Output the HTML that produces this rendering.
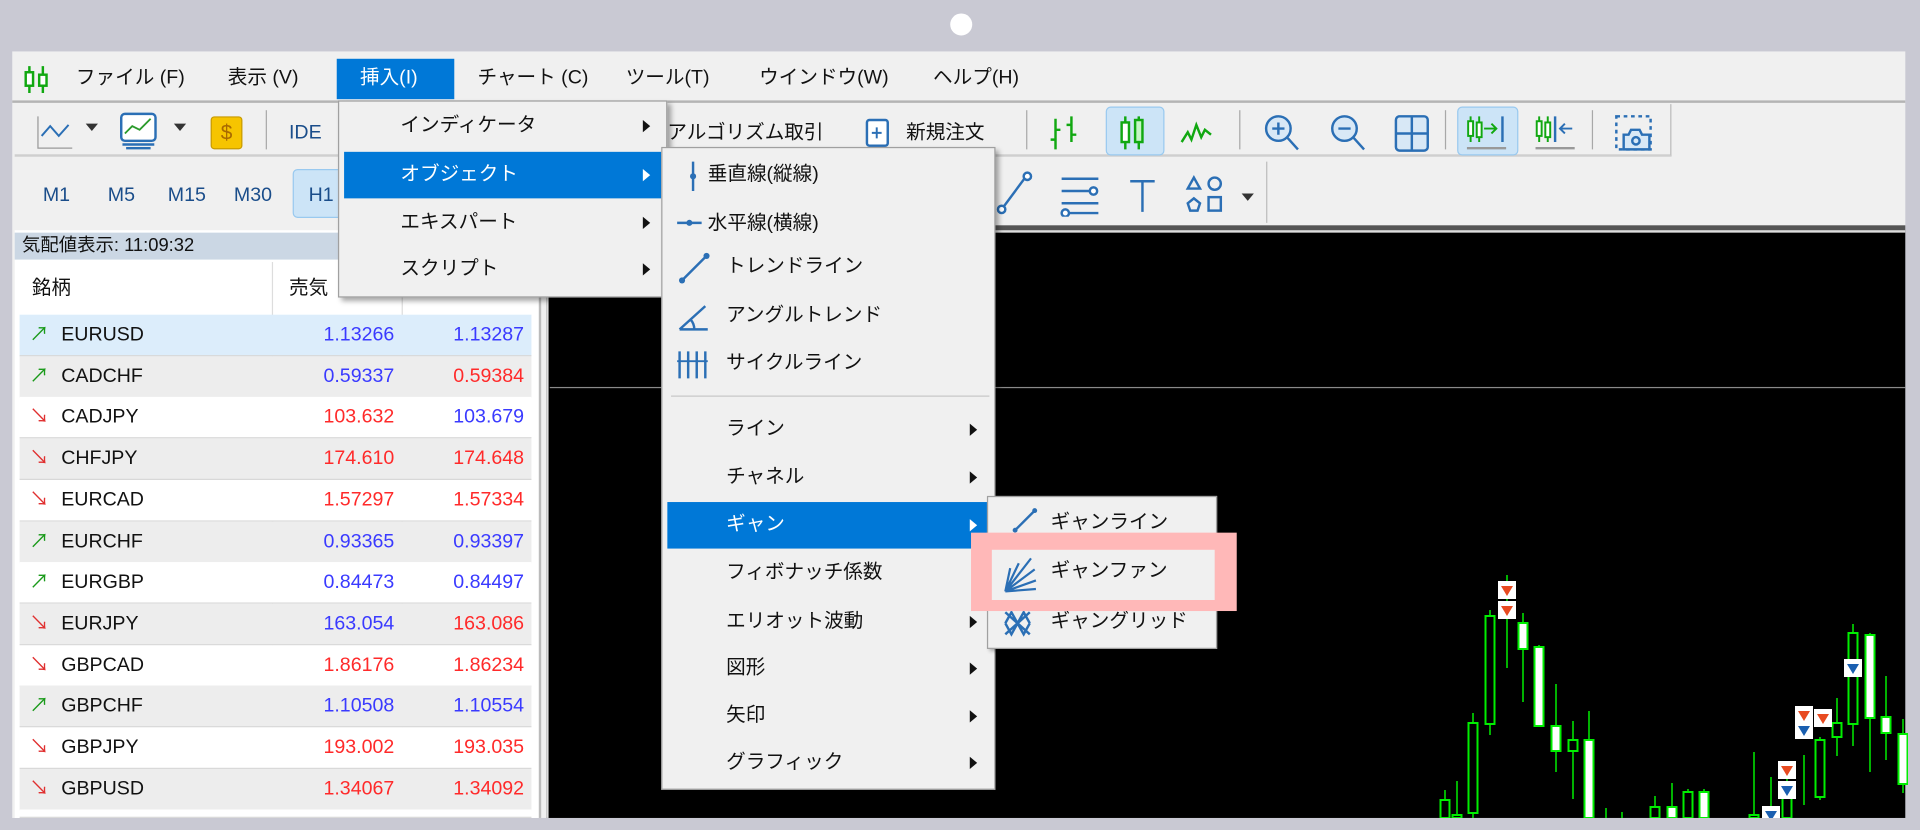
<!DOCTYPE html>
<html><head><meta charset="utf-8"><style>
*{margin:0;padding:0;box-sizing:border-box}
html,body{width:1920px;height:830px;overflow:hidden;background:#c9c9d3}
#w{position:absolute;left:0;top:0;width:1568px;height:678px;transform:scale(1.22449);transform-origin:0 0;font-family:"Liberation Sans","Noto Sans CJK JP",sans-serif;font-size:16px;color:#111}
.a{position:absolute}
.t{position:absolute;white-space:nowrap;line-height:20px}
.mi{position:absolute;white-space:nowrap;line-height:20px}
.arr{position:absolute;width:0;height:0;border-top:5px solid transparent;border-bottom:5px solid transparent;border-left:6px solid #111}
.hl{background:#0078d7;color:#fff}
.row{position:absolute;left:16px;width:418px;height:34px;border-bottom:1px solid #d8d8d8}
.row span{position:absolute;top:7px;line-height:20px}
.b{color:#3a3aff}.r{color:#ff2a2a}
.sep{position:absolute;width:1px;background:#a8a8a8}
</style></head><body>
<div id="w">
 <div class="a" style="left:776px;top:11px;width:18px;height:18px;border-radius:50%;background:#fff"></div>
 <div class="a" style="left:10px;top:42px;width:1546px;height:626px;background:#f0f0f0"></div>
 <svg class="a" style="left:18px;top:52px" width="24" height="26" viewBox="0 0 24 26"><g stroke="#11a811" stroke-width="2" fill="none"><line x1="6" y1="2" x2="6" y2="24"/><rect x="3" y="7" width="6" height="11" fill="#fff"/><line x1="17" y1="2" x2="17" y2="24"/><rect x="14" y="9" width="6" height="9" fill="#fff"/></g></svg>
 <div class="t" style="left:62px;top:54px">ファイル (F)</div>
 <div class="t" style="left:186px;top:54px">表示 (V)</div>
 <div class="a hl" style="left:275px;top:48px;width:96px;height:33px"></div>
 <div class="t" style="left:294px;top:54px;color:#fff">挿入(I)</div>
 <div class="t" style="left:390px;top:54px">チャート (C)</div>
 <div class="t" style="left:511px;top:54px">ツール(T)</div>
 <div class="t" style="left:620px;top:54px">ウインドウ(W)</div>
 <div class="t" style="left:762px;top:54px">ヘルプ(H)</div>
 <div class="a" style="left:10px;top:82px;width:1546px;height:2px;background:#b4b4b4"></div>
 <div class="a" style="left:12px;top:85px;width:1353px;height:43px;border-right:1px solid #bbb;border-bottom:2px solid #cfcfcf"></div>
 <svg class="a" style="left:30px;top:93px" width="30" height="30"><path d="M1 2V28H29" stroke="#999" fill="none"/><path d="M4 18L11 10L18 18L26 9" stroke="#2b6fb5" stroke-width="1.6" fill="none"/></svg>
 <div class="a" style="left:70px;top:101px;border-left:5px solid transparent;border-right:5px solid transparent;border-top:6px solid #333"></div>
 <svg class="a" style="left:96px;top:91px" width="36" height="32"><rect x="3" y="2" width="28" height="22" rx="3" fill="#fff" stroke="#2b6fb5" stroke-width="2"/><path d="M6 18L12 12L18 15L27 6" stroke="#2b9a2b" fill="none" stroke-width="1.5"/><path d="M4 27H30M7 30H27" stroke="#2b6fb5" stroke-width="2"/></svg>
 <div class="a" style="left:142px;top:101px;border-left:5px solid transparent;border-right:5px solid transparent;border-top:6px solid #333"></div>
 <div class="a" style="left:172px;top:95px;width:26px;height:27px;background:#f6c400;border:1px solid #c89a00;border-radius:3px;color:#a86a00;font-size:17px;text-align:center;line-height:25px">$</div>
 <div class="sep" style="left:217px;top:90px;height:32px"></div>
 <div class="t" style="left:236px;top:99px;color:#1a4d8a">IDE</div>
 <div class="t" style="left:545px;top:99px">アルゴリズム取引</div>
 <svg class="a" style="left:706px;top:96px" width="22" height="26"><rect x="2" y="2" width="17" height="21" rx="2" fill="#fff" stroke="#2b6fb5" stroke-width="2"/><path d="M10 8V17M6 12.5H14" stroke="#2b6fb5" stroke-width="1.6"/></svg>
 <div class="t" style="left:740px;top:99px">新規注文</div>
 <div class="sep" style="left:838px;top:90px;height:32px"></div>
 <svg class="a" style="left:855px;top:92px" width="34" height="32"><path d="M7 5V30M7 22H3M7 14H11M20 3V24M20 10H16M20 18H24" stroke="#11a811" stroke-width="2" fill="none"/></svg>
 <div class="a" style="left:903px;top:87px;width:48px;height:40px;background:#cce4f7;border:1px solid #99c9ef;border-radius:4px"></div>
 <svg class="a" style="left:910px;top:92px" width="34" height="32"><g stroke="#11a811" stroke-width="2" fill="#fff"><path d="M9 3V30M20 3V30"/><rect x="6" y="8" width="6" height="16"/><rect x="17" y="6" width="6" height="18" fill="#c6f5c6"/></g></svg>
 <svg class="a" style="left:963px;top:96px" width="34" height="24"><path d="M2 20L7 12L10 18L14 6L18 16L21 10L26 14" stroke="#11a811" stroke-width="2" fill="none"/></svg>
 <div class="sep" style="left:1012px;top:90px;height:32px"></div>
 <svg class="a" style="left:1030px;top:92px" width="34" height="34"><circle cx="14" cy="13" r="10" stroke="#2b6fb5" stroke-width="2" fill="#d8e8f6"/><path d="M21 20L30 30M14 8V18M9 13H19" stroke="#2b6fb5" stroke-width="2"/></svg>
 <svg class="a" style="left:1084px;top:92px" width="34" height="34"><circle cx="14" cy="13" r="10" stroke="#2b6fb5" stroke-width="2" fill="#d8e8f6"/><path d="M21 20L30 30M9 13H19" stroke="#2b6fb5" stroke-width="2"/></svg>
 <svg class="a" style="left:1138px;top:93px" width="32" height="32"><rect x="2" y="2" width="26" height="28" rx="3" fill="#d8e8f6" stroke="#2b6fb5" stroke-width="2"/><path d="M15 2V30M2 16H28" stroke="#2b6fb5" stroke-width="2"/></svg>
 <div class="sep" style="left:1180px;top:90px;height:32px"></div>
 <div class="a" style="left:1190px;top:87px;width:50px;height:40px;background:#cce4f7;border:1px solid #99c9ef;border-radius:4px"></div>
 <svg class="a" style="left:1196px;top:92px" width="40" height="34"><g stroke="#11a811" stroke-width="1.6" fill="#fff"><path d="M5 3V24M12 3V24"/><rect x="3" y="7" width="4" height="12"/><rect x="10" y="8" width="4" height="12"/></g><path d="M16 13H26M22 9L26 13L22 17" stroke="#11a811" stroke-width="1.6" fill="none"/><path d="M31 3V24" stroke="#2b6fb5" stroke-width="2"/><path d="M2 29H34" stroke="#999" stroke-width="2"/></svg>
 <svg class="a" style="left:1252px;top:92px" width="40" height="34"><g stroke="#11a811" stroke-width="1.6" fill="#fff"><path d="M5 3V24M12 3V24"/><rect x="3" y="7" width="4" height="12"/><rect x="10" y="8" width="4" height="12"/></g><path d="M18 3V24" stroke="#2b6fb5" stroke-width="2"/><path d="M32 13H22M26 9L22 13L26 17" stroke="#2b6fb5" stroke-width="1.6" fill="none"/><path d="M2 29H34" stroke="#999" stroke-width="2"/></svg>
 <div class="sep" style="left:1300px;top:90px;height:32px"></div>
 <svg class="a" style="left:1314px;top:92px" width="40" height="34"><rect x="6" y="3" width="28" height="27" fill="none" stroke="#2b6fb5" stroke-width="2" stroke-dasharray="3 3"/><path d="M12 30V18H16L18 14H25L27 18H33V30Z" fill="#d8e8f6" stroke="#2b6fb5" stroke-width="2"/><circle cx="22" cy="23" r="3" fill="none" stroke="#2b6fb5" stroke-width="2"/></svg>
 <div class="a" style="left:12px;top:132px;width:1023px;height:50px;border-right:1px solid #bbb"></div>
 <div class="t" style="left:35px;top:150px;color:#1a4d8a">M1</div>
 <div class="t" style="left:88px;top:150px;color:#1a4d8a">M5</div>
 <div class="t" style="left:137px;top:150px;color:#1a4d8a">M15</div>
 <div class="t" style="left:191px;top:150px;color:#1a4d8a">M30</div>
 <div class="a" style="left:239px;top:138px;width:50px;height:40px;background:#cce4f7;border:1px solid #99c9ef;border-radius:4px"></div>
 <div class="t" style="left:252px;top:150px;color:#1a4d8a">H1</div>
 <svg class="a" style="left:812px;top:138px" width="36" height="40"><path d="M6 33L26 6" stroke="#2b6fb5" stroke-width="2"/><circle cx="6" cy="33" r="3" fill="#fff" stroke="#2b6fb5" stroke-width="2"/><circle cx="27" cy="6" r="3" fill="#fff" stroke="#2b6fb5" stroke-width="2"/></svg>
 <svg class="a" style="left:864px;top:143px" width="38" height="34"><path d="M3 3H33M3 13H26M3 23H33M8 31H33" stroke="#2b6fb5" stroke-width="2"/><circle cx="29" cy="13" r="3" fill="#fff" stroke="#2b6fb5" stroke-width="2"/><circle cx="6" cy="31" r="3" fill="#fff" stroke="#2b6fb5" stroke-width="2"/></svg>
 <svg class="a" style="left:920px;top:145px" width="28" height="32"><path d="M3 3H23M13 3V28" stroke="#2b6fb5" stroke-width="2"/></svg>
 <svg class="a" style="left:968px;top:142px" width="38" height="38"><path d="M7 3L12 12H2Z" fill="none" stroke="#2b6fb5" stroke-width="2"/><circle cx="24" cy="8" r="5" fill="none" stroke="#2b6fb5" stroke-width="2"/><path d="M7 20L12 24L10 30H4L2 24Z" fill="none" stroke="#2b6fb5" stroke-width="2"/><rect x="19" y="19" width="10" height="11" fill="none" stroke="#2b6fb5" stroke-width="2"/></svg>
 <div class="a" style="left:1014px;top:158px;border-left:5px solid transparent;border-right:5px solid transparent;border-top:6px solid #333"></div>
 <div class="a" style="left:440px;top:184px;width:1116px;height:4px;background:#555"></div>
 <div class="a" style="left:446px;top:188px;width:1110px;height:480px;background:#000;border-left:2px solid #ddd;border-top:2px solid #ddd"></div>
 <div class="a" style="left:449px;top:316px;width:1107px;height:1px;background:#8a8a8a"></div>
 <div class="a" style="left:12px;top:188px;width:430px;height:480px;background:#fff;border-right:2px solid #bbb"></div>
 <div class="a" style="left:12px;top:190px;width:428px;height:22px;background:#cbd7e4"></div>
 <div class="t" style="left:18px;top:191px;font-size:15px">気配値表示: 11:09:32</div>
 <div class="a" style="left:222px;top:214px;width:1px;height:454px;background:#ddd"></div>
 <div class="a" style="left:328px;top:214px;width:1px;height:454px;background:#ddd"></div>
 <div class="t" style="left:26px;top:226px">銘柄</div>
 <div class="t" style="left:236px;top:226px">売気</div>
 <div id="rows"></div>
 <div class="a" style="left:276px;top:82px;width:269px;height:161px;background:#f0f0f0;border:1px solid #a0a0a0;box-shadow:3px 3px 4px rgba(0,0,0,.35)"></div>
 <div class="mi" style="left:327px;top:93px">インディケータ</div><div class="arr" style="left:525px;top:98px"></div>
 <div class="a hl" style="left:281px;top:124px;width:259px;height:38px"></div>
 <div class="mi" style="left:327px;top:133px;color:#fff">オブジェクト</div><div class="arr" style="left:525px;top:138px;border-left-color:#fff"></div>
 <div class="mi" style="left:327px;top:172px">エキスパート</div><div class="arr" style="left:525px;top:177px"></div>
 <div class="mi" style="left:327px;top:210px">スクリプト</div><div class="arr" style="left:525px;top:215px"></div>
 <div class="a" style="left:540px;top:120px;width:273px;height:525px;background:#f0f0f0;border:1px solid #a0a0a0;box-shadow:3px 3px 4px rgba(0,0,0,.35)"></div>
 <svg class="a" style="left:560px;top:131px" width="12" height="26"><path d="M6 1V25" stroke="#2b6fb5" stroke-width="2"/><circle cx="6" cy="13" r="2.5" fill="#2b6fb5"/></svg>
 <div class="mi" style="left:578px;top:133px">垂直線(縦線)</div>
 <svg class="a" style="left:552px;top:177px" width="22" height="10"><path d="M1 5H21" stroke="#2b6fb5" stroke-width="2"/><circle cx="11" cy="5" r="2.5" fill="#2b6fb5"/></svg>
 <div class="mi" style="left:578px;top:173px">水平線(横線)</div>
 <svg class="a" style="left:554px;top:206px" width="26" height="26"><path d="M3 23L23 3" stroke="#2b6fb5" stroke-width="2"/><circle cx="3" cy="23" r="2.5" fill="#2b6fb5"/><circle cx="23" cy="3" r="2.5" fill="#2b6fb5"/></svg>
 <div class="mi" style="left:593px;top:208px">トレンドライン</div>
 <svg class="a" style="left:552px;top:246px" width="28" height="26"><path d="M3 23H26M3 23L24 4M15 23A12 12 0 0 0 12 15" stroke="#2b6fb5" stroke-width="2" fill="none"/></svg>
 <div class="mi" style="left:593px;top:248px">アングルトレンド</div>
 <svg class="a" style="left:552px;top:285px" width="28" height="26"><path d="M3 2V24M10 2V24M17 2V24M24 2V24" stroke="#2b6fb5" stroke-width="2"/><path d="M1 10H26" stroke="#2b6fb5" stroke-width="1.5"/></svg>
 <div class="mi" style="left:593px;top:287px">サイクルライン</div>
 <div class="a" style="left:548px;top:323px;width:260px;height:1px;background:#c8c8c8"></div>
 <div class="mi" style="left:593px;top:341px">ライン</div><div class="arr" style="left:792px;top:346px"></div>
 <div class="mi" style="left:593px;top:380px">チャネル</div><div class="arr" style="left:792px;top:385px"></div>
 <div class="a hl" style="left:545px;top:410px;width:263px;height:38px"></div>
 <div class="mi" style="left:593px;top:419px;color:#fff">ギャン</div><div class="arr" style="left:792px;top:424px;border-left-color:#fff"></div>
 <div class="mi" style="left:593px;top:458px">フィボナッチ係数</div>
 <div class="mi" style="left:593px;top:498px">エリオット波動</div><div class="arr" style="left:792px;top:503px"></div>
 <div class="mi" style="left:593px;top:536px">図形</div><div class="arr" style="left:792px;top:541px"></div>
 <div class="mi" style="left:593px;top:575px">矢印</div><div class="arr" style="left:792px;top:580px"></div>
 <div class="mi" style="left:593px;top:613px">グラフィック</div><div class="arr" style="left:792px;top:618px"></div>
 <div class="a" style="left:806px;top:405px;width:188px;height:125px;background:#f0f0f0;border:1px solid #a0a0a0;box-shadow:2px 2px 3px rgba(0,0,0,.3)"></div>
 <svg class="a" style="left:826px;top:414px" width="22" height="22"><path d="M3 19L19 3" stroke="#2b6fb5" stroke-width="2"/><circle cx="3" cy="19" r="2" fill="#2b6fb5"/><circle cx="19" cy="3" r="2" fill="#2b6fb5"/></svg>
 <div class="mi" style="left:858px;top:417px">ギャンライン</div>
 <svg class="a" style="left:818px;top:496px" width="32" height="26"><g stroke="#2b6fb5" stroke-width="2" fill="none"><path d="M3 4L13 13L23 4M3 22L13 13L23 22M3 13L8 4L13 13L18 4L23 13M3 13L8 22L13 13L18 22L23 13"/></g></svg>
 <div class="mi" style="left:858px;top:498px">ギャングリッド</div>
 <div class="a" style="left:793px;top:435px;width:217px;height:64px;background:#ffb8b8"></div>
 <div class="a" style="left:810px;top:449px;width:182px;height:41px;background:#f0f0f0"></div>
 <svg class="a" style="left:818px;top:452px" width="30" height="34"><g stroke="#2b6fb5" stroke-width="1.8" fill="none"><path d="M3 31L24 4M3 31L27 13M3 31L28 22M3 31L28 29M3 31L14 8M3 31L7 12"/></g></svg>
 <div class="mi" style="left:858px;top:457px">ギャンファン</div>
</div>
<svg style="position:absolute;left:0;top:0" width="1920" height="830" id="cs"></svg>
<script>
var rows=[["EURUSD",1,"1.13266","b","1.13287","b","#dcedfb"],["CADCHF",1,"0.59337","b","0.59384","r","#ededed"],["CADJPY",0,"103.632","r","103.679","b","#fff"],["CHFJPY",0,"174.610","r","174.648","r","#ededed"],["EURCAD",0,"1.57297","r","1.57334","r","#fff"],["EURCHF",1,"0.93365","b","0.93397","b","#ededed"],["EURGBP",1,"0.84473","b","0.84497","b","#fff"],["EURJPY",0,"163.054","b","163.086","r","#ededed"],["GBPCAD",0,"1.86176","r","1.86234","r","#fff"],["GBPCHF",1,"1.10508","b","1.10554","b","#ededed"],["GBPJPY",0,"193.002","r","193.035","r","#fff"],["GBPUSD",0,"1.34067","r","1.34092","r","#ededed"],["",0,"","","","","#fff"]];
var h="";rows.forEach(function(r,i){var y=257+i*33.7;h+='<div class="row" style="top:'+y+'px;height:'+(i==12?7:34)+'px;background:'+r[6]+'">'+(r[0]?'<span style="left:8px;color:'+(r[1]?'#1a9a1a':'#e03030')+'">'+(r[1]?'↗':'↘')+'</span><span style="left:34px">'+r[0]+'</span><span class="'+r[3]+'" style="right:112px">'+r[2]+'</span><span class="'+r[5]+'" style="right:6px">'+r[4]+'</span>':'')+'</div>';});
document.getElementById("rows").innerHTML=h;
var c=[[1445,800,818,790,818,0],[1457,815,818,781,818,0],[1473,723,813,713,818,0],[1490,616,724,610,735,0],[1507,0,0,575,668,0],[1523,623,649,613,702,1],[1539,647,726,645,726,1],[1556,726,751,684,772,1],[1573,740,751,721,799,0],[1589,740,818,711,818,1],[1606,0,0,808,818,0],[1622,0,0,812,818,0],[1655,807,818,796,818,0],[1672,807,818,783,818,1],[1688,792,818,789,818,0],[1704,792,818,789,818,1],[1754,815,818,752,818,0],[1771,0,0,777,818,0],[1787,782,818,771,818,0],[1804,0,0,755,805,0],[1820,740,797,737,800,0],[1837,723,737,698,756,0],[1853,633,724,624,746,0],[1870,635,718,633,772,1],[1886,717,733,676,760,1],[1903,734,784,719,793,1]];
var s="";c.forEach(function(k){s+='<line x1="'+k[0]+'" y1="'+k[3]+'" x2="'+k[0]+'" y2="'+k[4]+'" stroke="#00ee00" stroke-width="1.5"/>';if(k[2]>k[1])s+='<rect x="'+(k[0]-4.5)+'" y="'+k[1]+'" width="9" height="'+(k[2]-k[1])+'" fill="'+(k[5]?'#fff':'#000')+'" stroke="#00ee00" stroke-width="2"/>';});
[[1507,590,"#e84a20"],[1507,610,"#e84a20"],[1804,715,"#e84a20"],[1804,730,"#1a5fb0"],[1823,718,"#e84a20"],[1853,668,"#1a5fb0"],[1787,770,"#e84a20"],[1787,790,"#1a5fb0"],[1771,815,"#1a5fb0"]].forEach(function(m){s+='<rect x="'+(m[0]-9)+'" y="'+(m[1]-9)+'" width="18" height="18" fill="#fff"/><path d="M'+(m[0]-6)+' '+(m[1]-4)+'H'+(m[0]+6)+'L'+m[0]+' '+(m[1]+6)+'Z" fill="'+m[2]+'"/>';});
s+='<rect x="1908" y="0" width="12" height="830" fill="#c9c9d3"/><rect x="0" y="818" width="1920" height="12" fill="#c9c9d3"/>';
document.getElementById("cs").innerHTML=s;
</script>
</body></html>
